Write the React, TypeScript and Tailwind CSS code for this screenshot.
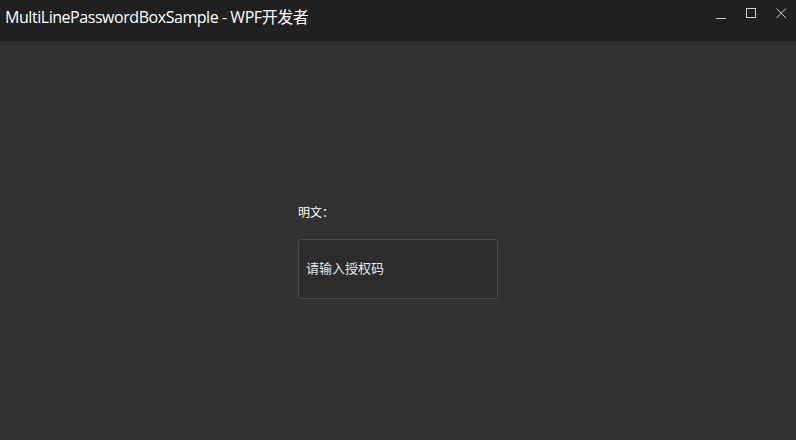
export default function App() {
  return (
    <div className="w-[796px] h-[440px] flex flex-col bg-[#323232] overflow-hidden font-['Open_Sans','Noto_Sans_CJK_SC',sans-serif]">
      {/* Title bar */}
      <div className="h-[41px] shrink-0 bg-[#202020] flex items-start justify-between">
        <span className="pl-[5px] pt-[7px] text-[16px] leading-[20px] text-white tracking-[-0.45px]">
          MultiLinePasswordBoxSample - WPF开发者
        </span>
        <div className="flex items-start pt-[5px] text-[#d0d0d0]">
          <div className="w-[30px] h-[16px] flex items-center justify-center">
            <svg width="11" height="12" viewBox="0 0 11 12">
              <path d="M0 11.5H10" stroke="currentColor" strokeWidth="1" />
            </svg>
          </div>
          <div className="w-[30px] h-[16px] flex items-center justify-center">
            <svg width="11" height="11" viewBox="0 0 11 11">
              <rect x="0.5" y="0.5" width="9" height="9" fill="none" stroke="currentColor" strokeWidth="1" />
            </svg>
          </div>
          <div className="w-[30px] h-[16px] flex items-center justify-center">
            <svg width="11" height="11" viewBox="0 0 11 11">
              <path d="M0.5 0.5L10 10M10 0.5L0.5 10" stroke="currentColor" strokeWidth="1" />
            </svg>
          </div>
        </div>
      </div>

      {/* Content */}
      <div className="flex-1 flex justify-center">
        <div className="w-[200px] pt-[164px] flex flex-col">
          <span className="text-[12px] leading-[16px] text-white">明文：</span>
          <div className="mt-[18px] h-[60px] rounded-[3px] border border-[#4a4a4a] bg-[#2c2c2c] flex items-center px-[7px]">
            <span className="text-[13px] text-[#e6e6e6]">请输入授权码</span>
          </div>
        </div>
      </div>
    </div>
  );
}
